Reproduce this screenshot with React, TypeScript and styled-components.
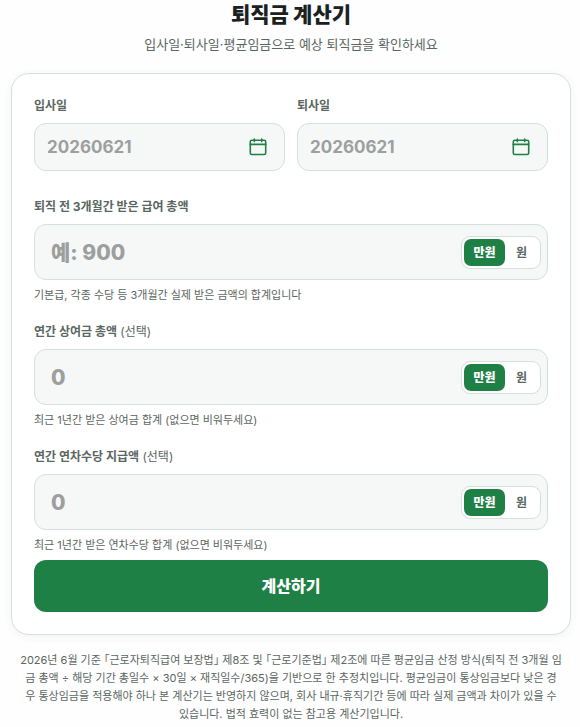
import React, { useState } from "react";
import styled, { createGlobalStyle } from "styled-components";

const GlobalStyle = createGlobalStyle`
  * { box-sizing: border-box; }
  body {
    margin: 0;
    background: #fefefe;
    color: #5a6661;
    font-family: Inter, "Noto Sans CJK KR", sans-serif;
  }
  input, button { font-family: inherit; }
`;

const Page = styled.main`
  padding: 0 9px 0 11px;
`;

const Container = styled.div`
  max-width: 560px;
  margin: 0 auto;
`;

const Header = styled.header`
  text-align: center;
`;

const Title = styled.h1`
  margin: 0;
  font-size: 21px;
  line-height: 30px;
  font-weight: 900;
  color: #1a211e;
`;

const Subtitle = styled.p`
  margin: 4px 0 18px;
  font-size: 13px;
  line-height: 21px;
`;

const Card = styled.form`
  display: flex;
  flex-direction: column;
  padding: 22px;
  background: #ffffff;
  border: 1px solid #d5dfdb;
  border-radius: 18px;
  box-shadow: 0 2px 10px rgba(20, 70, 45, 0.06);
`;

const DateRow = styled.div`
  display: grid;
  grid-template-columns: 1fr 1fr;
  gap: 12px;
  margin-bottom: 26px;
`;

const AmountList = styled.div`
  display: grid;
  gap: 18px;
  margin-bottom: 6px;
`;

const Field = styled.div`
  min-width: 0;
`;

const Label = styled.label`
  display: block;
  margin-bottom: 8px;
  font-size: 12px;
  line-height: 19px;
  font-weight: 700;
`;

const Optional = styled.span`
  font-weight: 400;
`;

const InputBox = styled.div<{ $large?: boolean }>`
  display: flex;
  align-items: center;
  height: ${(p) => (p.$large ? 56 : 48)}px;
  padding: ${(p) => (p.$large ? "0 6px 0 16px" : "0 17px 0 12px")};
  background: #f6f8f7;
  border: 1px solid #d5dfdb;
  border-radius: 12px;
`;

const TextInput = styled.input<{ $large?: boolean }>`
  flex: 1;
  min-width: 0;
  width: 100%;
  height: 100%;
  padding: 0;
  border: 0;
  outline: 0;
  background: transparent;
  color: #1a211e;
  font-size: ${(p) => (p.$large ? 21 : 17)}px;
  font-weight: ${(p) => (p.$large ? 800 : 700)};
  &::placeholder { color: #9d9f9e; opacity: 1; }
`;

const CalendarButton = styled.button`
  display: flex;
  padding: 0;
  border: 0;
  background: transparent;
  color: #1f8046;
  cursor: pointer;
`;

const UnitToggle = styled.div`
  display: flex;
  flex: none;
  padding: 2px;
  background: #ffffff;
  border: 1px solid #d5dfdb;
  border-radius: 9px;
`;

const UnitButton = styled.button<{ $active: boolean; $wide: boolean }>`
  width: ${(p) => (p.$wide ? 41 : 33)}px;
  height: 27px;
  padding: 0 0 2px;
  border: 0;
  border-radius: 7px;
  background: ${(p) => (p.$active ? "#1f8046" : "transparent")};
  color: ${(p) => (p.$active ? "#ffffff" : "#5a6661")};
  font-size: 12px;
  font-weight: ${(p) => (p.$active ? 900 : 700)};
  cursor: pointer;
`;

const Hint = styled.p`
  margin: 6px 0 0;
  font-size: 11px;
  line-height: 18px;
`;

const Submit = styled.button`
  height: 52px;
  padding: 0 0 3px;
  border: 0;
  border-radius: 12px;
  background: #1f8046;
  color: #ffffff;
  font-size: 16px;
  font-weight: 900;
  cursor: pointer;
`;

const Notice = styled.p`
  margin: 16px 0 0;
  padding: 0 8px;
  text-align: center;
  font-size: 11px;
  line-height: 18px;
  font-feature-settings: "halt";

  @media (max-width: 575px) {
    br { display: none; }
  }
`;

function CalendarIcon() {
  return (
    <svg width="18" height="18" viewBox="0 0 18 18" fill="none" stroke="currentColor" strokeWidth="1.6" strokeLinecap="round" strokeLinejoin="round" aria-hidden="true">
      <rect x="1.3" y="2.2" width="15.4" height="14.3" rx="1.6" />
      <path d="M1.3 6.4h15.4M5.3 1v2.6M12.7 1v2.6" />
    </svg>
  );
}

function DateField({ id, label }: { id: string; label: string }) {
  return (
    <Field>
      <Label htmlFor={id}>{label}</Label>
      <InputBox>
        <TextInput id={id} inputMode="numeric" placeholder="20260621" />
        <CalendarButton type="button" aria-label={`${label} 달력 열기`}>
          <CalendarIcon />
        </CalendarButton>
      </InputBox>
    </Field>
  );
}

interface AmountFieldProps {
  id: string;
  label: string;
  optional?: boolean;
  placeholder: string;
  hint: string;
}

function AmountField({ id, label, optional, placeholder, hint }: AmountFieldProps) {
  const [unit, setUnit] = useState("만원");
  return (
    <Field>
      <Label htmlFor={id}>
        {label}
        {optional && <Optional> (선택)</Optional>}
      </Label>
      <InputBox $large>
        <TextInput $large id={id} inputMode="numeric" placeholder={placeholder} aria-describedby={`${id}-hint`} />
        <UnitToggle role="group" aria-label={`${label} 단위`}>
          {["만원", "원"].map((name) => (
            <UnitButton key={name} type="button" $wide={name.length > 1} $active={unit === name} aria-pressed={unit === name} onClick={() => setUnit(name)}>
              {name}
            </UnitButton>
          ))}
        </UnitToggle>
      </InputBox>
      <Hint id={`${id}-hint`}>{hint}</Hint>
    </Field>
  );
}

export default function App() {
  return (
    <Page>
      <GlobalStyle />
      <Container>
        <Header>
          <Title>퇴직금 계산기</Title>
          <Subtitle>입사일·퇴사일·평균임금으로 예상 퇴직금을 확인하세요</Subtitle>
        </Header>
        <Card onSubmit={(e) => e.preventDefault()}>
          <DateRow>
            <DateField id="start" label="입사일" />
            <DateField id="end" label="퇴사일" />
          </DateRow>
          <AmountList>
            <AmountField id="salary" label="퇴직 전 3개월간 받은 급여 총액" placeholder="예: 900" hint="기본급, 각종 수당 등 3개월간 실제 받은 금액의 합계입니다" />
            <AmountField id="bonus" label="연간 상여금 총액" optional placeholder="0" hint="최근 1년간 받은 상여금 합계 (없으면 비워두세요)" />
            <AmountField id="leave" label="연간 연차수당 지급액" optional placeholder="0" hint="최근 1년간 받은 연차수당 합계 (없으면 비워두세요)" />
          </AmountList>
          <Submit type="submit">계산하기</Submit>
        </Card>
        <Notice>
          2026년 6월 기준 「근로자퇴직급여 보장법」 제8조 및 「근로기준법」 제2조에 따른 평균임금 산정 방식(퇴직 전 3개월 임<br />금 총액 ÷ 해당 기간 총일수 × 30일 × 재직일수/365)을 기반으로 한 추정치입니다. 평균임금이 통상임금보다 낮은 경<br />우 통상임금을 적용해야 하나 본 계산기는 반영하지 않으며, 회사 내규·휴직기간 등에 따라 실제 금액과 차이가 있을 수 <br />있습니다. 법적 효력이 없는 참고용 계산기입니다.
        </Notice>
      </Container>
    </Page>
  );
}
